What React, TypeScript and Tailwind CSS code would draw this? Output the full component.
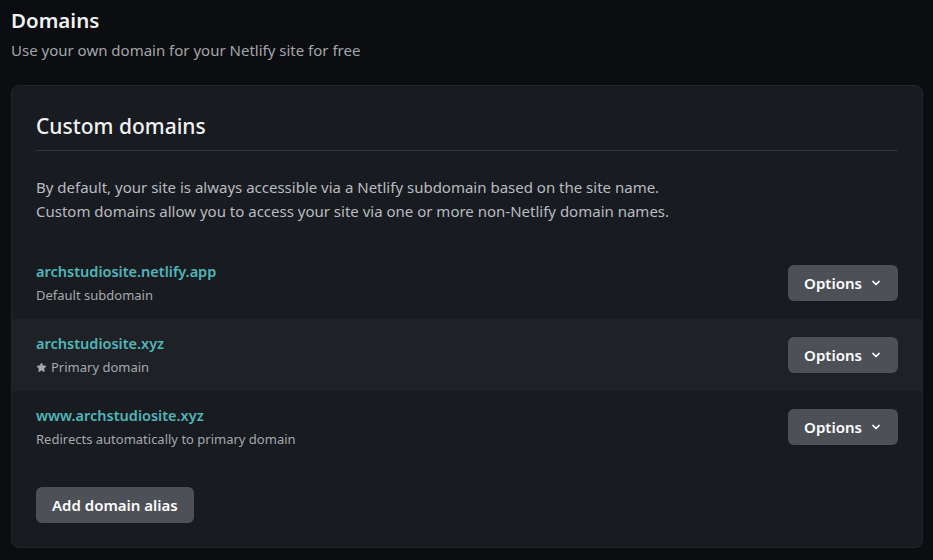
import React from 'react';
import { ChevronDown, Star } from 'lucide-react';

const domains = [
  { name: 'archstudiosite.netlify.app', note: 'Default subdomain', primary: false },
  { name: 'archstudiosite.xyz', note: 'Primary domain', primary: true },
  { name: 'www.archstudiosite.xyz', note: 'Redirects automatically to primary domain', primary: false },
];

const OptionsButton = () => (
  <button className="flex h-9 w-[110px] items-center justify-center gap-2 rounded-md bg-[#4d5157] text-[15px] font-semibold text-white">
    Options
    <ChevronDown size={12} strokeWidth={3.5} />
  </button>
);

export default function App() {
  return (
    <div
      className="min-h-[560px] bg-[#0b0d10] pt-[4px] pr-[10px] pl-[11px] text-[#e8e9ea]"
      style={{ fontFamily: '"Noto Sans", "Open Sans", sans-serif' }}
    >
      {/* Page header */}
      <h1 className="text-[20.5px] leading-8 font-semibold text-[#f1f2f3]">Domains</h1>
      <p className="mt-[2px] text-[15px] leading-6 text-[#a3a6aa]">
        Use your own domain for your Netlify site for free
      </p>

      {/* Card */}
      <section className="mt-[23px] rounded-lg border border-[#22252a] bg-[#181b20] pt-6 pb-6">
        <div className="px-6">
          <h2 className="border-b border-[#32353a] pb-2 text-[21px] leading-8 font-medium text-[#f1f2f3]">
            Custom domains
          </h2>
          <p className="mt-6 text-[15px] leading-6 text-[#b9bcc0]">
            By default, your site is always accessible via a Netlify subdomain based on the site name.
            <br />
            Custom domains allow you to access your site via one or more non-Netlify domain names.
          </p>
        </div>

        <ul className="mt-6">
          {domains.map((d, i) => (
            <li
              key={d.name}
              className={
                'flex h-[72px] items-center justify-between px-6 ' +
                (i === 1 ? 'bg-[#1e2126]' : '')
              }
            >
              <div>
                <div className="text-[14.5px] leading-6 font-semibold text-[#4fb6ba]">{d.name}</div>
                <div className="flex items-center gap-1 text-[13px] leading-6 text-[#a6a9ad]">
                  {d.primary && <Star size={11} fill="currentColor" strokeWidth={1} />}
                  {d.note}
                </div>
              </div>
              <OptionsButton />
            </li>
          ))}
        </ul>

        <div className="mt-6 px-6">
          <button className="h-9 rounded-md bg-[#4d5157] px-4 text-[15px] font-semibold text-white">
            Add domain alias
          </button>
        </div>
      </section>
    </div>
  );
}
